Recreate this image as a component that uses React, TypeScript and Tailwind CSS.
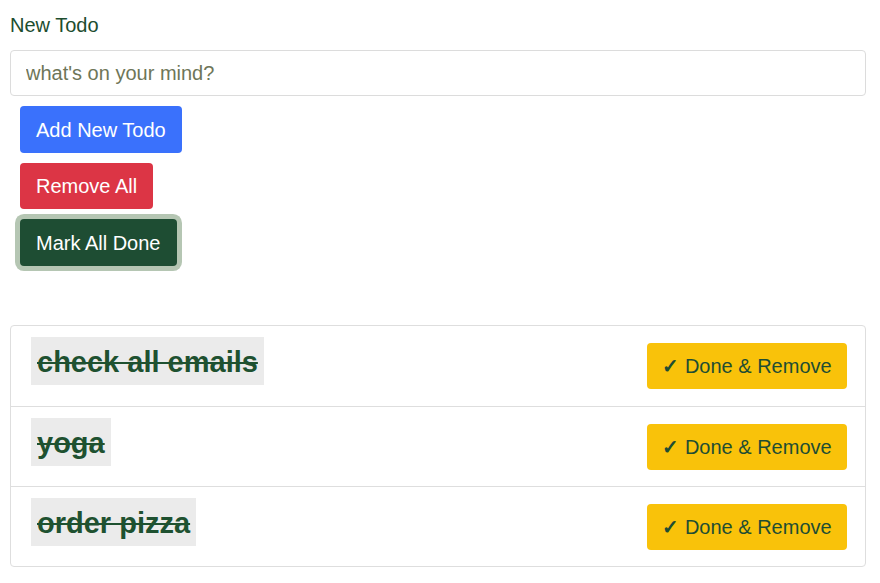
import React from "react";

const todos = ["check all emails", "yoga", "order pizza"];

export default function App() {
  return (
    <div
      className="bg-white w-[880px] h-[583px] px-[10px] pt-[14px] text-[#1e4d2f]"
      style={{ fontFamily: '"Liberation Sans", Arial, sans-serif' }}
    >
      <label className="block text-[20px] leading-[22px] text-[#1d4d2f] mb-[14px]">New Todo</label>
      <input
        className="block w-[856px] h-[46px] rounded-[4px] border border-[#dcdcdc] px-[15px] text-[20px] placeholder:text-[#6e7658] outline-none"
        placeholder="what's on your mind?"
      />
      <div className="flex flex-col items-start gap-[10px] pl-[10px] pt-[10px]">
        <button className="h-[47px] px-[16px] rounded-[4px] bg-[#3a71fc] text-white text-[20px]">
          Add New Todo
        </button>
        <button className="h-[46px] px-[16px] rounded-[4px] bg-[#dc3545] text-white text-[20px]">
          Remove All
        </button>
        <button className="h-[47px] px-[16px] rounded-[4px] bg-[#1e4d33] text-white text-[20px] ring-[5px] ring-[#b5c6b3]">
          Mark All Done
        </button>
      </div>
      <div className="mt-[59px] w-[856px] border border-[#dedede] rounded-[4px]">
        {todos.map((t, i) => (
          <div
            key={t}
            className={`flex items-center justify-between h-[80px] pl-[20px] pr-[18px] ${i > 0 ? "border-t border-[#dedede]" : ""}`}
          >
            <span className="-mt-[10px] bg-[#ebebeb] px-[6px] pt-[4px] h-[48px] flex items-center text-[29px] font-bold line-through text-[#1e5130]">
              {t}
            </span>
            <button className="h-[46px] w-[200px] rounded-[4px] bg-[#f9c20a] text-[#1e4d33] text-[20px]">
              <span className="font-bold">✓</span> Done &amp; Remove
            </button>
          </div>
        ))}
      </div>
    </div>
  );
}
